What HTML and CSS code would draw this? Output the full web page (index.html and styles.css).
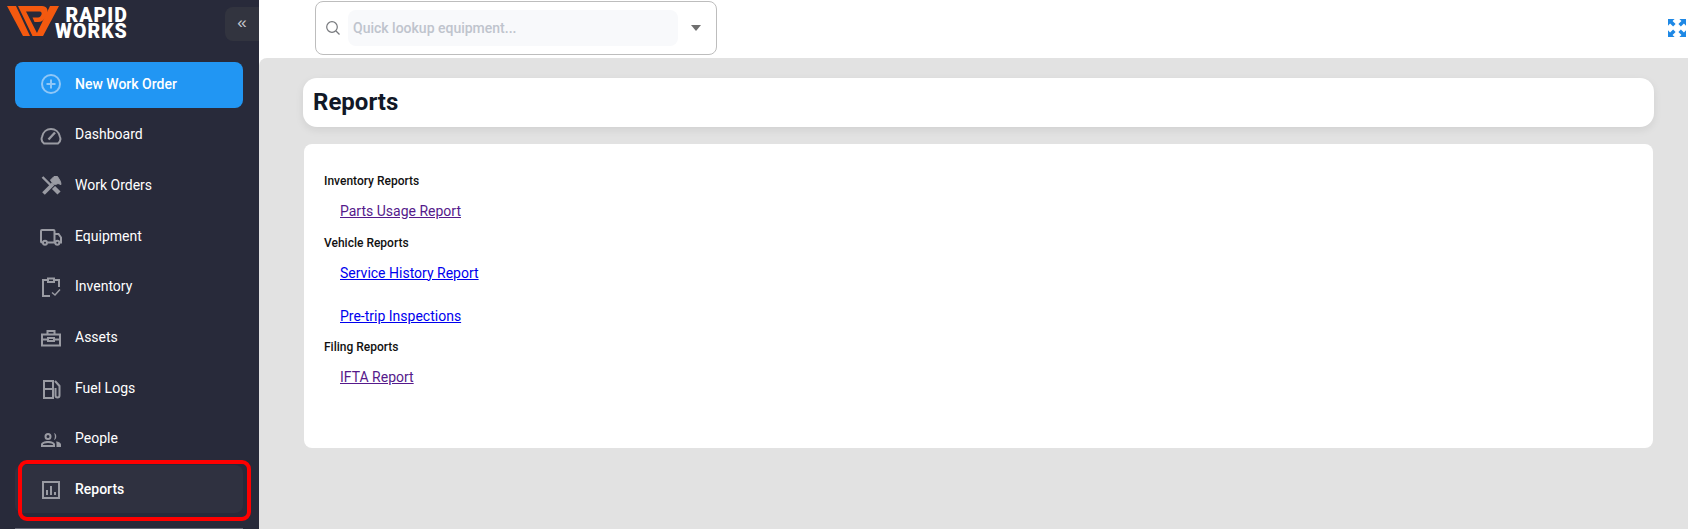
FILE: index.html
```html
<!DOCTYPE html>
<html lang="en">
<head>
    <meta charset="UTF-8">
    <title>Reports</title>
    <link rel="stylesheet" href="styles.css">
</head>
<body>
    <aside class="sidebar">
        <div class="brand">
            <svg class="brand-mark" width="52" height="30" viewBox="0 0 52 30" fill="#f4590f">
                <path d="M0 0H9L23 30H16Z"/>
                <path d="M11 0H35C40 0 41.500 4 40 8L38.500 11C37 14 34.500 16 31 16H27.500L25.500 11.500H31C33 11.500 34 10 34.500 8.500C35 7 34.500 5.500 32.500 5.500H19L31.500 30H25.500Z"/>
                <path d="M43 0H52L36 30H28.500Z"/>
            </svg>
            <div class="brand-name">
                <div>RAPID</div>
                <div>WORKS</div>
            </div>
            <button class="collapse-btn" type="button">«</button>
        </div>

        <a class="new-order" href="#">
            <svg class="nav-icon" viewBox="0 0 22 22" fill="none" stroke="#8fc7f7" stroke-width="2">
                <circle cx="11" cy="11" r="9"/>
                <path d="M11 6.500V15.500M6.500 11H15.500"/>
            </svg>
            New Work Order
        </a>

        <nav class="nav">
            <a class="nav-item" href="#">
                <svg class="nav-icon" viewBox="0 0 22 22" fill="none" stroke="#9a9ba3" stroke-width="2">
                    <path d="M4 20.500C1.500 18.500 1 16.500 2 14C3 8.500 7 6 11 6C15 6 19 8.500 20 14C21 16.500 20.500 18.500 18 20.500Z"/>
                    <path d="M8.500 16.500L15 9.500" stroke-width="2.400"/>
                </svg>
                Dashboard
            </a>
            <a class="nav-item" href="#">
                <svg class="nav-icon" viewBox="0 0 22 22" fill="none" stroke="#9a9ba3" stroke-width="2.400">
                    <path d="M2.500 3L12 12.500"/>
                    <path d="M13.500 13.500L19 19" stroke-width="4.400"/>
                    <path d="M3.500 19.500L13 10" stroke-width="3.800"/>
                    <path d="M10.500 6L14 2.500H17.500L20.500 7.500L21 10.500L18 9.500L15.500 10.500L13 10Z" fill="#9a9ba3" stroke-width="1"/>
                </svg>
                Work Orders
            </a>
            <a class="nav-item" href="#">
                <svg class="nav-icon" viewBox="0 0 22 22" fill="none" stroke="#9a9ba3" stroke-width="2">
                    <path d="M3 17.500H2C1.300 17.500 1 17 1 16.500V6C1 5.300 1.300 5 2 5H13.500C14.200 5 14.500 5.300 14.500 6V17.500H7.500"/>
                    <path d="M14.500 9H18.500L21 12.500V17.500H19.500M14.500 17.500H15"/>
                    <circle cx="5" cy="17.800" r="2"/>
                    <circle cx="17.300" cy="17.800" r="2"/>
                </svg>
                Equipment
            </a>
            <a class="nav-item" href="#">
                <svg class="nav-icon" viewBox="0 0 22 22" fill="none" stroke="#9a9ba3" stroke-width="2">
                    <path d="M8 5H3V21H10M14 5H19V12"/>
                    <path d="M8 3.500H14V7H8Z"/>
                    <path d="M12 17.500L15 20L20 14.500" stroke-width="1.500"/>
                </svg>
                Inventory
            </a>
            <a class="nav-item" href="#">
                <svg class="nav-icon" viewBox="0 0 22 22" fill="none" stroke="#9a9ba3" stroke-width="2">
                    <path d="M2 8.500H20V19.500H2Z"/>
                    <path d="M7.500 8.500V5H14.500V8.500"/>
                    <path d="M2 13.500H8M14 13.500H20M8 12H14V15H8Z"/>
                </svg>
                Assets
            </a>
            <a class="nav-item" href="#">
                <svg class="nav-icon" viewBox="0 0 22 22" fill="none" stroke="#9a9ba3" stroke-width="2">
                    <path d="M4 21V4H13V21Z"/>
                    <path d="M4 12H13"/>
                    <path d="M15 4L19.500 9V18.500C19.500 21 15.500 21 15.500 18.500V11"/>
                </svg>
                Fuel Logs
            </a>
            <a class="nav-item" href="#">
                <svg class="nav-icon" viewBox="0 0 22 22" fill="#9a9ba3">
                    <path fill-rule="evenodd" d="M8 6A3.500 3.500 0 1 1 8 13A3.500 3.500 0 1 1 8 6ZM8 8A1.500 1.500 0 1 0 8 11A1.500 1.500 0 1 0 8 8Z"/>
                    <path d="M14 6C17 6.500 17 12.500 14 13C15.200 11 15.200 8 14 6Z"/>
                    <path fill-rule="evenodd" d="M1 20V17.500C1 15.500 4.500 14 8 14C11.500 14 15 15.500 15 17.500V20ZM3 18H13V17.500C13 16.800 10.500 16 8 16C5.500 16 3 16.800 3 17.500Z"/>
                    <path d="M16 14.500C19 14.500 21 16 21 17.500V20H16.500V17C16.500 16 16.500 15.200 16 14.500Z"/>
                </svg>
                People
            </a>
            <a class="nav-item nav-item-active" href="#">
                <svg class="nav-icon" viewBox="0 0 22 22" fill="none" stroke="#9a9ba3" stroke-width="2">
                    <path d="M3 4H19V20H3Z"/>
                    <path d="M7 12V17M11 8V17M15 14V17"/>
                </svg>
                Reports
            </a>
        </nav>
        <div class="sidebar-line"></div>
    </aside>

    <div class="page">
        <header class="topbar">
            <div class="lookup">
                <svg width="16" height="16" viewBox="0 0 16 16" fill="none" stroke="#77797d" stroke-width="1.200">
                    <circle cx="7" cy="7" r="5.300"/>
                    <path d="M11 11L14.500 14.500"/>
                </svg>
                <div class="lookup-input">Quick lookup equipment...</div>
                <span class="lookup-caret"></span>
            </div>
            <svg class="expand" width="18" height="18" viewBox="0 0 19 19" fill="#1e88e5">
                <path d="M0 0H7L4.800 2.200L8 5.400L5.400 8L2.200 4.800L0 7Z"/>
                <path d="M19 0V7L16.800 4.800L13.600 8L11 5.400L14.200 2.200L12 0Z"/>
                <path d="M0 19V12L2.200 14.200L5.400 11L8 13.600L4.800 16.800L7 19Z"/>
                <path d="M19 19H12L14.200 16.800L11 13.600L13.600 11L16.800 14.200L19 12Z"/>
            </svg>
        </header>

        <main class="content">
            <div class="title-card">
                <h1>Reports</h1>
            </div>
            <section class="reports-card">
                <div class="group-title">Inventory Reports</div>
                <a class="report-link report-visited" href="#">Parts Usage Report</a>
                <div class="group-title">Vehicle Reports</div>
                <a class="report-link" href="#">Service History Report</a>
                <a class="report-link report-next" href="#">Pre-trip Inspections</a>
                <div class="group-title">Filing Reports</div>
                <a class="report-link report-visited" href="#">IFTA Report</a>
            </section>
        </main>
    </div>
</body>
</html>
```

FILE: styles.css
```css
* {
    box-sizing: border-box;
}
body {
    margin: 0;
    display: flex;
    height: 529px;
    overflow: hidden;
    font-family: Roboto, Arial, sans-serif;
    background: #fff;
}
.sidebar {
    width: 259px;
    flex-shrink: 0;
    background: #282a3a;
    padding: 0 16px 0 15px;
    display: flex;
    flex-direction: column;
}
.brand {
    height: 62px;
    margin-left: -8px;
    padding-top: 6px;
    display: flex;
    align-items: flex-start;
    position: relative;
}
.brand-name {
    margin: 2px 0 0 -4px;
    color: #fff;
    font-weight: 900;
    font-size: 19.500px;
    line-height: 15.500px;
    letter-spacing: 1px;
    text-align: right;
}
.collapse-btn {
    position: absolute;
    top: 7px;
    right: -16px;
    width: 34px;
    height: 34px;
    border: none;
    border-radius: 8px 0 0 8px;
    background: #32343f;
    color: #c5c6cc;
    font-size: 17px;
    line-height: 1;
    padding: 0 0 4px;
}
.new-order {
    height: 46px;
    display: flex;
    align-items: center;
    gap: 13px;
    padding: 0 0 2px 25px;
    border-radius: 8px;
    background: #2196f3;
    color: #fff;
    font-size: 14px;
    font-weight: 500;
    text-decoration: none;
}
.nav {
    display: flex;
    flex-direction: column;
    margin-top: 2.200px;
    gap: 2.700px;
}
.nav-item {
    height: 48px;
    display: flex;
    align-items: center;
    gap: 13px;
    padding-left: 25px;
    border-radius: 8px;
    color: #fff;
    font-size: 14px;
    text-decoration: none;
    position: relative;
}
.nav-icon {
    width: 22px;
    height: 22px;
    flex-shrink: 0;
}
.nav-item-active {
    background: #2f3140;
    font-weight: 500;
}
/* red marker drawn over the screenshot */
.nav-item-active::after {
    content: "";
    position: absolute;
    top: -5px;
    right: -8px;
    bottom: -8px;
    left: 3px;
    border: 4px solid #f00;
    border-radius: 9px;
}
.sidebar-line {
    height: 1px;
    margin-top: 15px;
    background: #666875;
}
.page {
    flex: 1;
    min-width: 0;
    display: flex;
    flex-direction: column;
}
.topbar {
    height: 58px;
    flex-shrink: 0;
    display: flex;
    align-items: flex-start;
    justify-content: space-between;
    padding: 1px 2px 0 56px;
}
.lookup {
    width: 402px;
    height: 54px;
    border: 1px solid #bdbdbd;
    border-radius: 8px;
    display: flex;
    align-items: center;
    padding: 0 12px 0 9px;
}
.lookup-input {
    width: 330px;
    height: 36px;
    margin-left: 7px;
    padding-left: 5px;
    display: flex;
    align-items: center;
    border-radius: 8px;
    background: #f8f9fb;
    color: #bfc4cd;
    font-size: 14px;
    font-weight: 500;
}
.lookup-caret {
    margin-left: 13px;
    border-left: 5.500px solid transparent;
    border-right: 5.500px solid transparent;
    border-top: 6px solid #6f6f6f;
}
.expand {
    margin-top: 18px;
}
.content {
    flex: 1;
    background: #e2e2e2;
    border-top-left-radius: 8px;
    padding: 20px 34px 0 44px;
}
.title-card {
    height: 49px;
    display: flex;
    align-items: center;
    padding: 0 0 2px 10px;
    border-radius: 14px;
    background: #fff;
    box-shadow: 0 3px 8px rgba(0, 0, 0, 0.08);
}
h1 {
    margin: 0;
    font-size: 24px;
    font-weight: 700;
    color: #111827;
}
.reports-card {
    height: 304px;
    margin: 17px 1px 0;
    padding: 29px 20px 0;
    border-radius: 8px;
    background: #fff;
}
.group-title {
    height: 16px;
    display: flex;
    align-items: center;
    font-size: 12px;
    font-weight: 500;
    color: #111;
}
.report-link {
    display: block;
    width: max-content;
    margin: 13px 0 14.500px 16px;
    font-size: 14px;
    line-height: 18px;
    color: #0000ee;
}
.report-visited {
    color: #551a8b;
}
.report-next {
    margin-top: 25px;
}
```
